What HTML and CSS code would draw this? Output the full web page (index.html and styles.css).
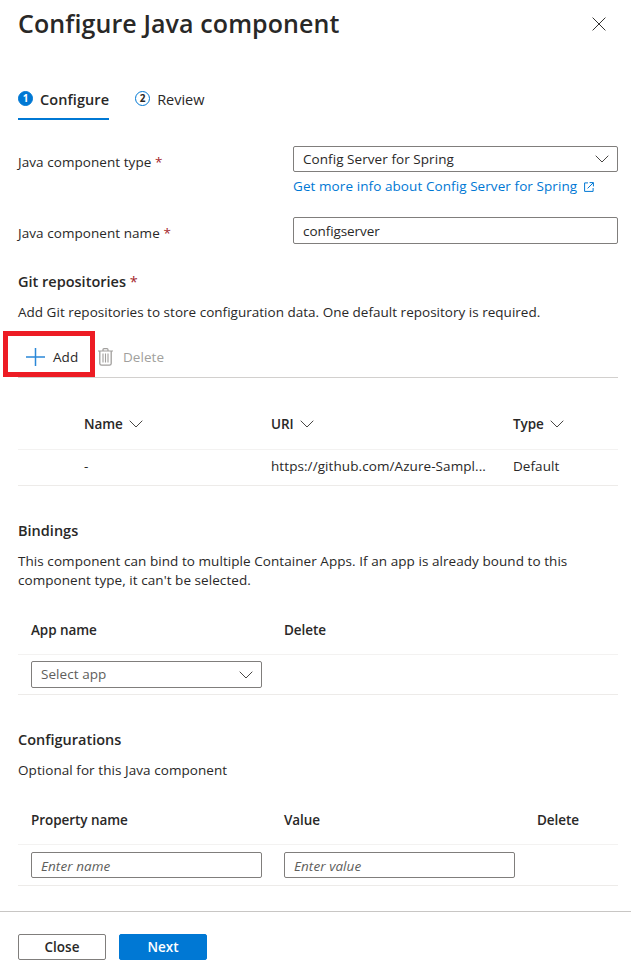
FILE: index.html
```html
<!DOCTYPE html>
<html lang="en">
<head>
<meta charset="utf-8">
<title>Configure Java component</title>
<link rel="stylesheet" href="styles.css">
</head>
<body>
<svg class="defs" width="0" height="0" aria-hidden="true">
  <symbol id="chevron" viewBox="0 0 14 8"><path d="M.7.7 7 7 13.3.7" fill="none" stroke="currentColor" stroke-width="1"/></symbol>
</svg>
<main class="panel">
  <header class="header">
    <h1 class="title">Configure Java component</h1>
    <svg class="close-icon" width="14" height="14" viewBox="0 0 14 14"><path d="M.6.6l12.8 12.8M13.4.6.6 13.4" fill="none" stroke="currentColor" stroke-width="1"/></svg>
  </header>

  <nav class="tabs">
    <a class="tab tab-active"><span class="step step-active">1</span><span>Configure</span></a>
    <a class="tab"><span class="step">2</span><span>Review</span></a>
  </nav>

  <section class="form">
    <div class="field field-type">
      <label class="label">Java component type <span class="req">*</span></label>
      <div class="control">
        <div class="select select-type"><span>Config Server for Spring</span><svg class="chevron"><use href="#chevron"/></svg></div>
        <a class="link"><span>Get more info about Config Server for Spring</span><svg width="10" height="10" viewBox="0 0 10 10"><path d="M4 .9H.6v8.5h8.5V6M5.6.6h3.8v3.8M9.2.8 3.6 6.4" fill="none" stroke="currentColor" stroke-width="1"/></svg></a>
      </div>
    </div>
    <div class="field field-name">
      <label class="label">Java component name <span class="req">*</span></label>
      <div class="control"><div class="input">configserver</div></div>
    </div>
  </section>

  <section class="git">
    <h2 class="heading">Git repositories <span class="req">*</span></h2>
    <p class="desc desc-git">Add Git repositories to store configuration data. One default repository is required.</p>
    <div class="toolbar">
      <div class="command command-add">
        <svg width="19" height="18" viewBox="0 0 19 18"><path d="M9.5 0v18M0 9h19" fill="none" stroke="#2b88d8" stroke-width="1.5"/></svg>
        <span>Add</span>
      </div>
      <div class="command command-delete">
        <svg width="15" height="18" viewBox="0 0 15 18"><g fill="none" stroke="#a19f9d"><path d="M0 3h15M5 3V1.7Q5 .6 6 .6h3q1 0 1 1.1V3" stroke-width="1.2"/><path d="M1.8 3v12.4q0 1.8 1.8 1.8h7.8q1.8 0 1.8-1.8V3" stroke-width="1.3"/><path d="M5 5.5v9M7.5 5.5v9M10 5.5v9" stroke-width="1.1"/></g></svg>
        <span>Delete</span>
      </div>
    </div>
    <div class="grid grid-head grid-git git-head">
      <span class="c-name">Name<svg class="chevron"><use href="#chevron"/></svg></span>
      <span>URI<svg class="chevron"><use href="#chevron"/></svg></span>
      <span>Type<svg class="chevron"><use href="#chevron"/></svg></span>
    </div>
    <div class="grid grid-git git-row">
      <span class="c-name">-</span><span class="uri">https://github.com/Azure-Sampl...</span><span>Default</span>
    </div>
  </section>

  <section class="bindings">
    <h2 class="heading">Bindings</h2>
    <p class="desc">This component can bind to multiple Container Apps. If an app is already bound to this<br>component type, it can't be selected.</p>
    <div class="grid grid-head grid-form"><span>App name</span><span>Delete</span></div>
    <div class="grid grid-form bind-row">
      <div class="select select-app"><span>Select app</span><svg class="chevron"><use href="#chevron"/></svg></div>
    </div>
  </section>

  <section class="configs">
    <h2 class="heading">Configurations</h2>
    <p class="desc">Optional for this Java component</p>
    <div class="grid grid-head grid-form"><span>Property name</span><span>Value</span><span>Delete</span></div>
    <div class="grid grid-form config-row">
      <div class="input hint">Enter name</div>
      <div class="input hint">Enter value</div>
    </div>
  </section>

  <footer class="footer">
    <button class="btn">Close</button>
    <button class="btn btn-primary">Next</button>
  </footer>
</main>
</body>
</html>
```
FILE: styles.css
```css
* { box-sizing: border-box; }
body {
  margin: 0;
  background: #fff;
  color: #292827;
  font: 13.5px/19px "Open Sans", "Noto Sans", sans-serif;
  letter-spacing: 0.06px;
}
h1, h2, p { margin: 0; }
.defs { position: absolute; }
.panel { width: 631px; height: 978px; overflow: hidden; }

.header { height: 48px; padding: 0 24px 2px 18px; display: flex; align-items: center; justify-content: space-between; }
.title { font-size: 25px; line-height: 32px; font-weight: 600; letter-spacing: 0.1px; }
.close-icon { color: #323130; margin: 2px 1px 0 0; }

.tabs { display: flex; align-items: flex-end; gap: 26px; height: 72px; padding: 0 18px; }
.tab { display: flex; align-items: center; gap: 7px; height: 40px; border-bottom: 2px solid transparent; font-size: 14.5px; letter-spacing: 0; }
.tab-active { border-color: #0078d4; font-weight: 600; letter-spacing: 0.08px; }
.step { width: 15px; height: 15px; border: 1px solid #0078d4; border-radius: 50%; font-size: 10px; line-height: 13px; text-align: center; font-weight: 700; margin-top: -2px; letter-spacing: 0; }
.step-active { background: #0078d4; color: #fff; }

.form { padding: 26px 13px 0 18px; height: 151px; }
.field { display: flex; }
.field-type { height: 71px; }
.label { width: 275px; padding-top: 7px; }
.control { flex: 1; }
.req { color: #a4262c; font-weight: 400; }
.select, .input { display: flex; align-items: center; justify-content: space-between; height: 26px; padding: 0 8px 0 9px; border: 1px solid #807e7c; border-radius: 2px; }
.input { padding-top: 2px; }
.field-name .input { height: 27px; letter-spacing: -0.07px; }
.chevron { width: 14px; height: 8px; color: #484644; }
.link { display: flex; align-items: center; gap: 7px; color: #0078d4; margin-top: 5px; letter-spacing: 0.08px; }

.heading { font-size: 14.5px; line-height: 20px; font-weight: 600; padding-left: 18px; letter-spacing: 0; }
.git .heading { margin-top: 1px; }
.desc { padding-left: 18px; margin-top: 11px; }
.desc-git { letter-spacing: 0.015px; }

.toolbar { display: flex; margin: 9px 13px 0 18px; height: 47px; border-bottom: 1px solid #d2d0ce; }
.command { display: flex; align-items: center; height: 46px; padding-top: 6px; }
.command-add { width: 92px; margin-left: -15px; border: 5px solid #ed1c24; padding-left: 18px; gap: 8px; }
.command-delete { margin-left: 3px; gap: 10px; color: #a19f9d; }

.grid { display: grid; align-items: center; margin: 0 13px 0 18px; border-bottom: 1px solid #edebe9; }
.grid > span { display: flex; align-items: center; white-space: nowrap; }
.grid-head { font-weight: 600; height: 50px; letter-spacing: -0.06px; border-color: #f3f2f1; }
.grid-head .chevron { margin: -2px 0 0 6px; }
.grid-git { grid-template-columns: 253px 242px 1fr; }
.c-name { padding-left: 66px; }
.git-head { margin-top: 22px; }
.git-row { height: 36px; padding-bottom: 2px; }
.uri { letter-spacing: 0.08px; }
.grid-form { grid-template-columns: 231px 231px 1fr; column-gap: 22px; padding-left: 13px; }
.grid-form.grid-head { margin-top: 15px; padding-top: 2px; }

.bindings, .configs { padding-top: 35px; }
.bind-row { height: 40px; }
.select-app { height: 27px; color: #605e5c; }
.config-row { height: 41px; }
.hint { font-style: italic; color: #605e5c; }

.footer { display: flex; gap: 13px; margin-top: 25px; padding: 22px 18px; border-top: 1px solid #c8c6c4; }
.btn { width: 88px; height: 26px; padding: 0; border: 1px solid #807e7c; border-radius: 2px; background: #fff; color: #292827; font: 600 13.5px/24px "Open Sans", sans-serif; letter-spacing: 0; }
.btn-primary { background: #0078d4; border-color: #0078d4; color: #fff; }
```
